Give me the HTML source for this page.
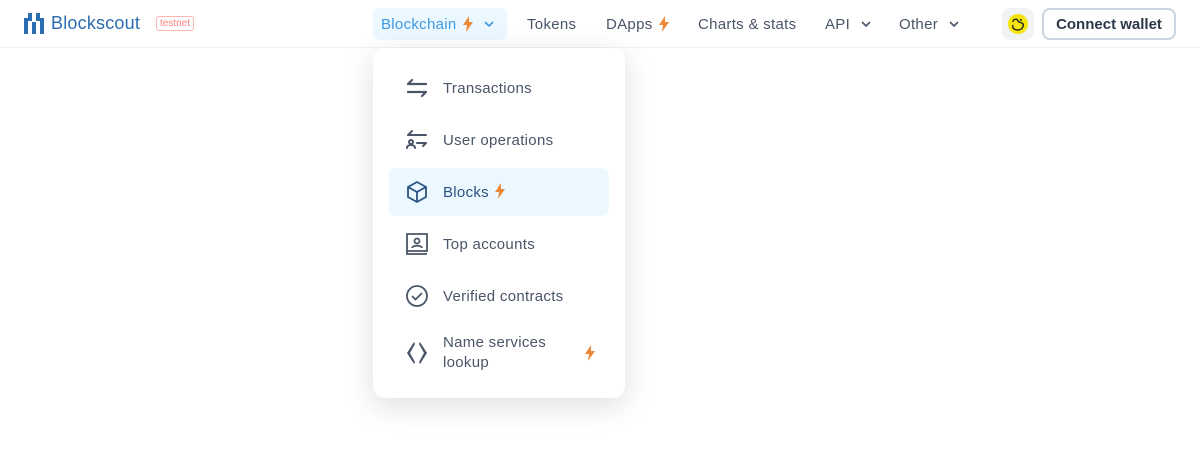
<!DOCTYPE html>
<html><head><meta charset="utf-8"><style>
*{box-sizing:border-box;margin:0;padding:0}
body{width:1200px;height:450px;background:#fff;font-family:"Liberation Sans",sans-serif;position:relative;overflow:hidden;color:#4a5568}
.hdr{position:absolute;left:0;top:0;width:1200px;height:48px;border-bottom:1px solid #edf2f7}
.logo{position:absolute;left:24px;top:13px;display:flex;align-items:center}
.logo span{font-size:18px;color:#2b6cb0;margin-left:7px;letter-spacing:0.2px}
.badge{position:absolute;left:156px;top:16px;border:1px solid #feb2b2;border-radius:3px;font-size:10px;color:#fc8181;padding:0 3px;line-height:13px}
.nav{position:absolute;top:8px;height:32px;display:flex;align-items:center;font-size:15px;color:#4a5568;letter-spacing:0.3px}
.bolt{display:inline-block;margin-left:6px}
.chev{margin-left:8px}
.ddb{left:373px;width:134px;background:#ebf8ff;color:#4299e1;border-radius:8px;padding-left:8px}
.menu{position:absolute;left:373px;top:48px;width:252px;height:350px;background:#fff;border-radius:12px;box-shadow:0 8px 30px rgba(0,0,0,0.13)}
.item{position:absolute;left:16px;width:220px;height:48px;display:flex;align-items:center;font-size:15px;color:#4a5568;border-radius:8px;letter-spacing:0.3px}
.item svg.ic{position:absolute;left:16px}
.item .t{position:absolute;left:54px}
.act{background:#ebf8ff;color:#2c5282}
.duck{position:absolute;left:1002px;top:8px;width:32px;height:32px;background:#f1f3f5;border-radius:8px}
.cw{position:absolute;left:1042px;top:8px;width:134px;height:32px;border:2px solid #cbd5e0;border-radius:8px;font-size:15px;font-weight:bold;color:#2d3748;display:flex;align-items:center;justify-content:center}
</style></head><body>
<div class="hdr"></div>
<div class="logo"><svg width="20" height="21" viewBox="0 0 20 21"><rect x="0" y="5" width="4" height="16" fill="#2b6cb0"/><rect x="4" y="0" width="4" height="8" fill="#2b6cb0"/><rect x="8" y="9" width="4" height="12" fill="#2b6cb0"/><rect x="12" y="0" width="4" height="8" fill="#2b6cb0"/><rect x="16" y="5" width="4" height="16" fill="#2b6cb0"/></svg><span>Blockscout</span></div>
<div class="badge">testnet</div>

<div class="nav ddb">Blockchain<svg class="bolt" width="10" height="16" viewBox="0 0 10 16"><path d="M6 0L0 9h4l-1 7 7-10H6z" fill="#ed8936"/></svg><svg class="chev" width="16" height="16" viewBox="0 0 16 16"><path d="M4 6l4 4 4-4" stroke="#4299e1" stroke-width="1.6" fill="none"/></svg></div>
<div class="nav" style="left:527px">Tokens</div>
<div class="nav" style="left:606px">DApps<svg class="bolt" width="10" height="16" viewBox="0 0 10 16"><path d="M6 0L0 9h4l-1 7 7-10H6z" fill="#ed8936"/></svg></div>
<div class="nav" style="left:698px">Charts &amp; stats</div>
<div class="nav" style="left:825px">API<svg class="chev" width="16" height="16" viewBox="0 0 16 16"><path d="M4 6l4 4 4-4" stroke="#4a5568" stroke-width="1.6" fill="none"/></svg></div>
<div class="nav" style="left:899px">Other<svg class="chev" width="16" height="16" viewBox="0 0 16 16"><path d="M4 6l4 4 4-4" stroke="#4a5568" stroke-width="1.6" fill="none"/></svg></div>
<div class="duck"><svg width="32" height="32" viewBox="0 0 32 32"><circle cx="16" cy="16" r="10" fill="#f5e50a"/><path d="M11 14c0-3 4-4 5-1 1 2 4 1 5 3s-1 6-5 6-6-2-5-5" fill="none" stroke="#222" stroke-width="1.4"/><circle cx="19" cy="12" r="1" fill="#222"/></svg></div>
<div class="cw">Connect wallet</div>

<div class="menu">
<div class="item" style="top:16px"><svg class="ic" width="24" height="24" viewBox="0 0 24 24" fill="none" stroke="#4a5568" stroke-width="2.2" stroke-linecap="round"><path d="M3 8h18M7 4L3 8M3 16h18M17 20l4-4"/></svg><span class="t">Transactions</span></div>
<div class="item" style="top:68px"><svg class="ic" width="24" height="24" viewBox="0 0 24 24" fill="none" stroke="#4a5568" stroke-width="2" stroke-linecap="round"><path d="M3 7h18M7 3L3 7M12 15h9M18 18l3-3"/><circle cx="6" cy="14" r="2"/><path d="M2 20c0-2 2-3 4-3s4 1 4 3"/></svg><span class="t">User operations</span></div>
<div class="item act" style="top:120px"><svg class="ic" width="24" height="24" viewBox="0 0 24 24" fill="none" stroke="#2c5282" stroke-width="1.8" stroke-linejoin="round"><path d="M12 2l9 5v10l-9 5-9-5V7z"/><path d="M3 7l9 5 9-5M12 12v10"/></svg><span class="t">Blocks<svg class="bolt" width="10" height="16" viewBox="0 0 10 16" style="vertical-align:-2px"><path d="M6 0L0 9h4l-1 7 7-10H6z" fill="#ed8936"/></svg></span></div>
<div class="item" style="top:172px"><svg class="ic" width="24" height="24" viewBox="0 0 24 24" fill="none" stroke="#4a5568" stroke-width="1.8"><path d="M2 2h20v17H2zM2 19v3h20"/><circle cx="12" cy="9" r="2.5"/><path d="M7 16c1-3 9-3 10 0"/></svg><span class="t">Top accounts</span></div>
<div class="item" style="top:224px"><svg class="ic" width="24" height="24" viewBox="0 0 24 24" fill="none" stroke="#4a5568" stroke-width="1.8" stroke-linecap="round"><circle cx="12" cy="12" r="10"/><path d="M7.5 12.5l3 3 6-6"/></svg><span class="t">Verified contracts</span></div>
<div class="item" style="top:276px;height:58px"><svg class="ic" width="24" height="24" viewBox="0 0 24 24" fill="#4a5568"><path d="M9 1L2 12l7 11 1-2-5-9 5-9zM15 1l7 11-7 11-1-2 5-9-5-9z"/></svg><span class="t" style="line-height:20px">Name services<br>lookup</span><svg style="position:absolute;left:196px" width="10" height="16" viewBox="0 0 10 16"><path d="M6 0L0 9h4l-1 7 7-10H6z" fill="#ed8936"/></svg></div>
</div>
</body></html>
